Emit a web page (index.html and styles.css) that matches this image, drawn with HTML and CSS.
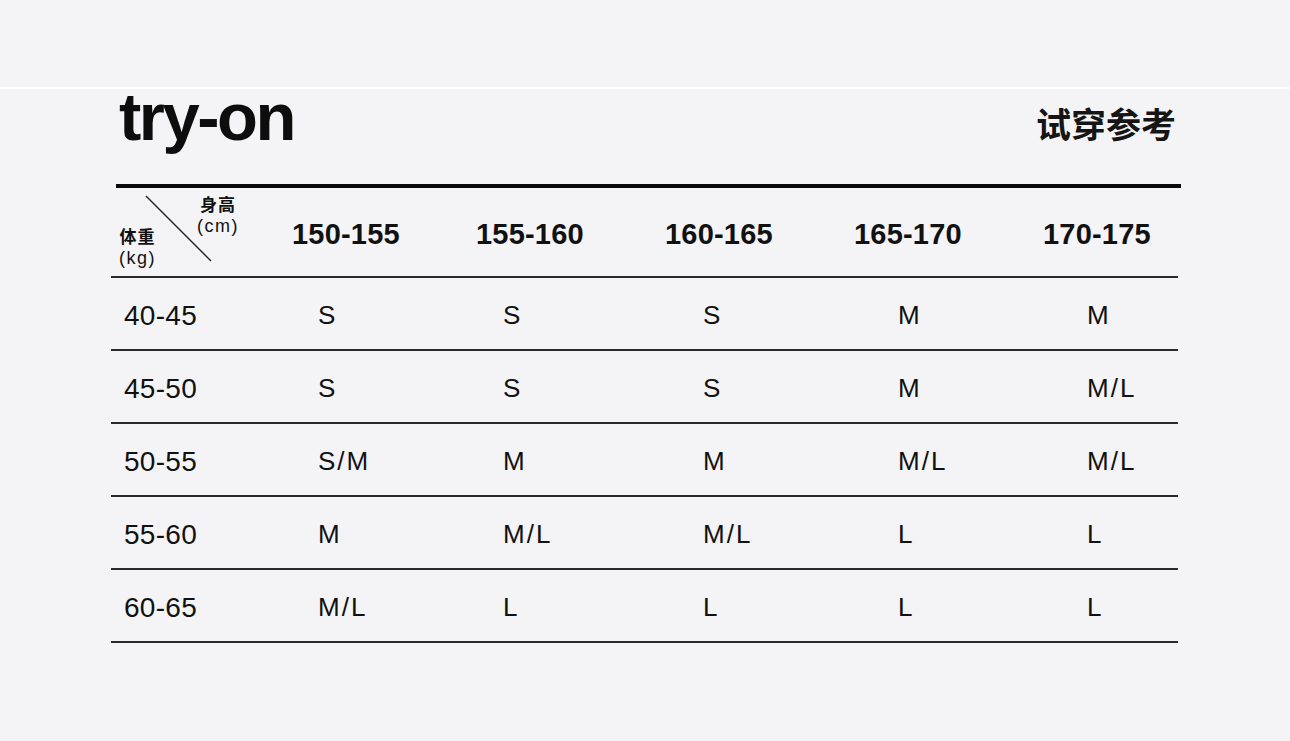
FILE: index.html
```html
<!DOCTYPE html>
<html lang="zh">
<head>
<meta charset="utf-8">
<title>try-on</title>
<link rel="stylesheet" href="styles.css">
</head>
<body>
<div class="topband"></div>
<main class="sheet">
  <div class="title-row">
    <h1 class="title">try-on</h1>
    <div class="subtitle">试穿参考</div>
  </div>
  <div class="rule"></div>
  <div class="table">
    <div class="head">
      <div class="corner">
        <svg class="diag" width="70" height="70" viewBox="0 0 70 70"><line x1="2" y1="2" x2="67" y2="67" stroke="#222" stroke-width="1.4"/></svg>
        <div class="h-top"><span class="cjk">身高</span><span class="unit">(cm)</span></div>
        <div class="h-bot"><span class="cjk">体重</span><span class="unit">(kg)</span></div>
      </div>
      <div class="hcell">150-155</div>
      <div class="hcell">155-160</div>
      <div class="hcell">160-165</div>
      <div class="hcell">165-170</div>
      <div class="hcell">170-175</div>
    </div>
    <div class="row"><div class="label">40-45</div><div class="val">S</div><div class="val">S</div><div class="val">S</div><div class="val">M</div><div class="val">M</div></div>
    <div class="row"><div class="label">45-50</div><div class="val">S</div><div class="val">S</div><div class="val">S</div><div class="val">M</div><div class="val">M/L</div></div>
    <div class="row"><div class="label">50-55</div><div class="val">S/M</div><div class="val">M</div><div class="val">M</div><div class="val">M/L</div><div class="val">M/L</div></div>
    <div class="row"><div class="label">55-60</div><div class="val">M</div><div class="val">M/L</div><div class="val">M/L</div><div class="val">L</div><div class="val">L</div></div>
    <div class="row"><div class="label">60-65</div><div class="val">M/L</div><div class="val">L</div><div class="val">L</div><div class="val">L</div><div class="val">L</div></div>
  </div>
</main>
</body>
</html>
```

FILE: styles.css
```css
html, body {
  margin: 0;
  padding: 0;
  background: #f4f4f6;
  color: #111;
  font-family: "Liberation Sans", Arial, "Noto Sans CJK SC", sans-serif;
}

.topband {
  height: 87px;
}

.sheet {
  border-top: 2px solid #ffffff;
  height: 652px;
}

.title-row {
  display: flex;
  justify-content: space-between;
  align-items: flex-start;
  padding: 0 114px 0 119px;
  height: 95px;
}

.title {
  margin: -2px 0 0 0;
  font-size: 67px;
  font-weight: 700;
  letter-spacing: -2.5px;
  line-height: 60px;
  color: #0d0d0d;
}

.subtitle {
  margin-top: 13px;
  font-family: "Noto Sans CJK SC", sans-serif;
  font-weight: 700;
  font-size: 35px;
  line-height: 42px;
  color: #151515;
}

.rule {
  margin: 0 109px 0 116px;
  height: 4px;
  background: #0a0a0a;
}

.table {
  margin: 0 112px 0 111px;
}

.head {
  display: grid;
  grid-template-columns: 181px 184px 189px 189px 189px 1fr;
  align-items: center;
  height: 88px;
  border-bottom: 2px solid #2a2a2a;
}

.corner {
  position: relative;
  height: 88px;
}

.diag {
  position: absolute;
  left: 33px;
  top: 6px;
}

.h-top {
  position: absolute;
  left: 86px;
  top: 3px;
  display: flex;
  flex-direction: column;
  align-items: center;
}

.h-bot {
  position: absolute;
  left: 8px;
  top: 35px;
  display: flex;
  flex-direction: column;
  align-items: center;
}

.cjk {
  font-family: "Noto Sans CJK SC", sans-serif;
  font-weight: 700;
  font-size: 17px;
  line-height: 25px;
  letter-spacing: 1px;
}

.unit {
  font-size: 18px;
  line-height: 21px;
  letter-spacing: 1.5px;
}

.hcell {
  font-weight: 700;
  font-size: 29px;
  letter-spacing: 0.2px;
  padding-top: 4px;
}

.row {
  display: grid;
  grid-template-columns: 207px 185px 200px 195px 189px 1fr;
  align-items: center;
  box-sizing: border-box;
  height: 73px;
  padding-top: 4px;
  border-bottom: 2px solid #2a2a2a;
}

.label {
  padding-left: 13px;
  font-size: 28px;
  letter-spacing: 0.3px;
}

.val {
  font-size: 26px;
  letter-spacing: 2px;
}
```
